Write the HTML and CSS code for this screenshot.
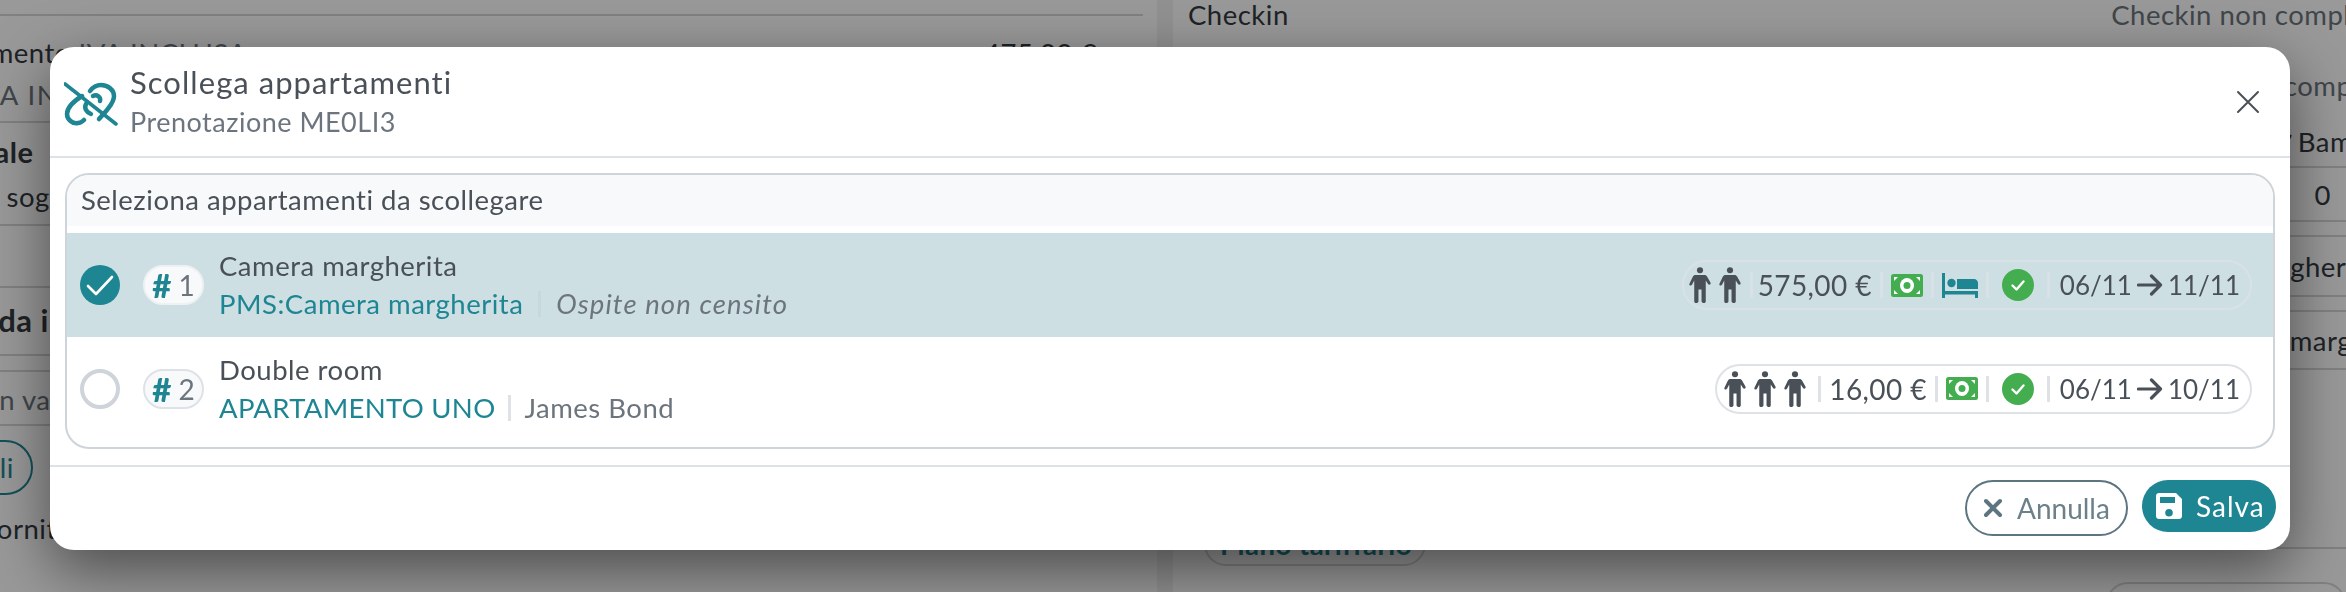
FILE: index.html
```html
<!DOCTYPE html>
<html lang="it">
<head>
  <meta charset="UTF-8">
  <meta name="viewport" content="width=device-width, initial-scale=1.0">
  <title>Scollega appartamenti</title>
  <link rel="stylesheet" href="styles.css">
</head>
<body>
  <svg class="defs" aria-hidden="true">
    <symbol id="person" viewBox="0 0 24 40">
      <circle cx="12" cy="3.6" r="3.4"/>
      <path d="M7 9h10c1.4 0 2.2.6 3 1.800l3.600 6.400c.5 1 .2 1.900-.6 2.300-.8.4-1.600.1-2.100-.7L18.400 15v23c0 1.200-.8 2-2 2s-2.700-.8-2.700-2V25h-3.400v13c0 1.200-1 2-2.700 2-1.200 0-2-.8-2-2V15l-2.500 4.800c-.5.8-1.300 1.100-2.100.7-.8-.4-1.100-1.300-.6-2.300L4 10.800C4.800 9.600 5.600 9 7 9z"/>
    </symbol>
    <symbol id="money" viewBox="0 0 32 23">
      <rect width="32" height="23" rx="2.500" fill="#43ad50"/>
      <ellipse cx="16" cy="11.500" rx="7" ry="7.500" fill="#fff"/>
      <circle cx="16" cy="11.500" r="3.500" fill="#43ad50"/>
      <path d="M3 3h4L3 7zM29 3h-4l4 4zM3 20h4l-4-4zM29 20h-4l4-4z" fill="#fff"/>
    </symbol>
    <symbol id="okay" viewBox="0 0 32 32">
      <circle cx="16" cy="16" r="16" fill="#43ad50"/>
      <path d="M10.500 16.500l4 4 7-8" fill="none" stroke="#fff" stroke-width="2.400" stroke-linecap="round" stroke-linejoin="round"/>
    </symbol>
    <symbol id="arrow" viewBox="0 0 26 22">
      <path d="M1.500 11h22M14.500 2l9 9-9 9" fill="none" stroke="#495057" stroke-width="3.200" stroke-linecap="round" stroke-linejoin="round"/>
    </symbol>
  </svg>

  <div class="page">
    <div class="col col--left">
      <div class="line-row h16"></div>
      <div class="line-row h107 split">
        <div>
          <div class="txt-cut cut-ment">Pagamento <span class="muted">IVA INCLUSA</span></div>
          <div class="txt-cut muted cut-inc">IVA INCLUSA</div>
        </div>
        <div class="price">475,00 € <span class="plus">+</span></div>
      </div>
      <div class="line-row h103">
        <div class="txt-cut bold cut-ale">Totale</div>
        <div class="txt-cut cut-sog">Il soggetto</div>
      </div>
      <div class="line-row h62"></div>
      <div class="line-row h68"><div class="txt-cut bold cut-da">Saldo da incassare</div></div>
      <div class="line-row h16b"></div>
      <div class="line-row h54"><div class="txt-cut muted cut-va">Non valido</div></div>
      <div class="tail">
        <span class="ghost-pill">Dettagli</span>
        <div class="txt-cut cut-ornit">Fornitore</div>
      </div>
    </div>

    <div class="col col--right">
      <div class="rrow r28"><span>Checkin</span><span class="muted over1">Checkin non completato</span></div>
      <div class="rrow r29"></div>
      <div class="rrow r56"><span></span><span class="muted over2">Checkin non completato</span></div>
      <div class="rrow r55 line"><span></span><span class="over3"><svg class="kid" viewBox="0 0 10 18" fill="none" stroke="#343a40" stroke-width="2"><path d="M9 1L1 17"/></svg>Bambini</span></div>
      <div class="rrow r54 line"><span></span><span class="zero">0</span></div>
      <div class="rrow r15 line"></div>
      <div class="rrow r60 line"><span></span><span class="over4">Camera margherita</span></div>
      <div class="rrow r15 line"></div>
      <div class="rrow r58 line"><span></span><span class="over5">Camera margherita</span></div>
      <div class="rrow r179 line"></div>
      <div class="plan-wrap"><span class="plan">Piano tariffario</span><span class="corner"></span></div>
    </div>
  </div>

  <div class="overlay"></div>

  <div class="modal">
    <header class="modal__head">
      <svg class="unlink" viewBox="0 0 54 44" fill="none" stroke="#1e8593" stroke-width="4.500" stroke-linecap="round">
        <path d="M1 2l51 40" stroke-width="3.600"/>
        <path d="M18 14C10 19 3 25 3 32c0 6 6 10 11 9 2 0 4-1 6-3"/>
        <path d="M26 9c3-4 7-6 11-6 7 0 13 5 13 11 0 6-4 10-7 14l-8 9"/>
        <path d="M29 14c4-2 8 1 7 5"/>
        <path d="M22 22c-2 4 0 8 5 10"/>
      </svg>
      <div class="modal__titles">
        <div class="modal__title">Scollega appartamenti</div>
        <div class="modal__sub">Prenotazione ME0LI3</div>
      </div>
      <svg class="close" viewBox="0 0 24 24" fill="none" stroke="#495057" stroke-width="2" stroke-linecap="round"><path d="M2 2l20 20M22 2L2 22"/></svg>
    </header>

    <div class="modal__body">
      <div class="card">
        <div class="card__head">Seleziona appartamenti da scollegare</div>

        <div class="room room--on">
          <span class="tick">
            <svg viewBox="0 0 40 40" fill="none" stroke="#fff" stroke-width="2.600" stroke-linecap="round" stroke-linejoin="round"><path d="M8 21l8 8 16-17"/></svg>
          </span>
          <span class="num"><b>#</b>1</span>
          <div class="room__text">
            <div class="room__name">Camera margherita</div>
            <div class="room__meta"><span class="teal">PMS:Camera margherita</span><i class="bar"></i><em>Ospite non censito</em></div>
          </div>
          <div class="chip">
            <svg class="person"><use href="#person"/></svg><svg class="person"><use href="#person"/></svg>
            <i class="bar bar--tight"></i><span>575,00 €</span>
            <i class="bar"></i><svg class="money"><use href="#money"/></svg>
            <i class="bar"></i>
            <svg class="bed" viewBox="0 0 36 25" fill="#1e8593"><path d="M0 0h3v18h33v7h-3v-3.500H3V25H0z"/><circle cx="9.500" cy="10" r="4.200"/><path d="M15 6h17c2.200 0 4 1.800 4 4v6H15z"/></svg>
            <i class="bar"></i><svg class="okay"><use href="#okay"/></svg>
            <i class="bar"></i><span class="dates">06/11<svg class="arrow"><use href="#arrow"/></svg>11/11</span>
          </div>
        </div>

        <div class="room room--last">
          <span class="tick tick--off"></span>
          <span class="num num--off"><b>#</b>2</span>
          <div class="room__text">
            <div class="room__name">Double room</div>
            <div class="room__meta"><span class="teal">APARTAMENTO UNO</span><i class="bar"></i><span class="muted">James Bond</span></div>
          </div>
          <div class="chip chip--plain">
            <svg class="person"><use href="#person"/></svg><svg class="person"><use href="#person"/></svg><svg class="person"><use href="#person"/></svg>
            <i class="bar"></i><span>16,00 €</span>
            <i class="bar"></i><svg class="money"><use href="#money"/></svg>
            <i class="bar"></i><svg class="okay"><use href="#okay"/></svg>
            <i class="bar"></i><span class="dates">06/11<svg class="arrow"><use href="#arrow"/></svg>10/11</span>
          </div>
        </div>
      </div>
    </div>

    <footer class="modal__foot">
      <button class="btn btn--line" type="button">
        <svg viewBox="0 0 20 20" fill="none" stroke="#5c7580" stroke-width="4" stroke-linecap="round"><path d="M3 3l14 14M17 3L3 17"/></svg>
        Annulla
      </button>
      <button class="btn btn--fill" type="button">
        <svg viewBox="0 0 26 26" fill="#fff"><path fill-rule="evenodd" d="M3 0h17l6 6v17c0 1.700-1.300 3-3 3H3c-1.700 0-3-1.300-3-3V3c0-1.700 1.300-3 3-3zm1 4v6h15V4zm9 12a3.800 3.800 0 1 0 0 7.600 3.800 3.800 0 0 0 0-7.600z"/></svg>
        Salva
      </button>
    </footer>
  </div>
</body>
</html>
```
FILE: styles.css
```css
* { box-sizing: border-box; }
html, body { margin: 0; height: 592px; overflow: hidden; }
body {
  font-family: "Lato", "Open Sans", sans-serif;
  font-size: 27.5px;
  letter-spacing: .5px;
  color: #343a40;
  background: #fff;
}
.defs { width: 0; height: 0; display: block; }
.muted { color: #6c757d; }
.bold { font-weight: 700; }

/* page behind the dialog */
.page {
  display: grid;
  grid-template-columns: 1173px 1fr;
  height: 592px;
  overflow: hidden;
}
.col--left { border-right: 16px solid #f2f2f2; padding-right: 14px; }
.col--right { padding-left: 15px; overflow: hidden; }
.line-row { display: flow-root; border-bottom: 2px solid #d8d8d8; }
.h16 { height: 16px; }
.h107 { height: 107px; }
.h103 { height: 103px; }
.h62 { height: 62px; }
.h68 { height: 68px; }
.h16b { height: 16px; }
.h54 { height: 54px; }
.split { display: flex; justify-content: space-between; padding-top: 20px; }
.txt-cut { white-space: nowrap; }
.cut-ment { margin-left: -69px; }
.cut-inc { margin: 9px 0 0 -28px; letter-spacing: 1.5px; }
.cut-ale { margin: 11px 0 0 -48px; font-size: 29px; }
.cut-sog { margin: 11px 0 0 -16px; }
.cut-da { margin: 13px 0 0 -88px; font-size: 31px; }
.cut-va { margin: 11px 0 0 -38px; }
.cut-ornit { margin: 17px 0 0 -18px; }
.price { margin-right: 22px; }
.plus { color: #43ad50; }
.tail { padding-top: 14px; }
.ghost-pill {
  display: inline-block;
  margin-left: -105px;
  padding: 9px 17px;
  border: 2px solid #1e8593;
  border-radius: 28px;
  color: #1e8593;
}
.rrow {
  display: flex;
  justify-content: space-between;
  align-items: center;
  white-space: nowrap;
}
.rrow.line { border-bottom: 2px solid #d8d8d8; }
.r28 { height: 28px; }
.r29 { height: 29px; }
.r56 { height: 56px; }
.r55 { height: 55px; padding-top: 4px; }
.r54 { height: 54px; }
.r15 { height: 15px; }
.r60 { height: 60px; }
.r58 { height: 58px; }
.r179 { height: 179px; }
.over1 { margin-right: -70px; }
.over2 { margin-right: -79px; }
.over3 { margin-right: -53px; }
.over4 { margin-right: -32px; }
.over5 { margin-right: -79px; }
.kid { width: 10px; height: 18px; margin-right: 6px; }
.zero { margin-right: 15px; }
.plan-wrap { display: flex; justify-content: space-between; align-items: flex-start; margin-left: 16px; }
.plan {
  margin-top: -29px;
  padding: 6px 0 0 14px;
  width: 222px;
  height: 46px;
  border: 2px solid #d8d8d8;
  border-radius: 22px;
  color: #1e8593;
  font-weight: 700;
  white-space: nowrap;
}
.corner {
  width: 240px;
  height: 60px;
  margin-top: 33px;
  border: 2px solid #d8d8d8;
  border-radius: 22px;
}

.overlay {
  position: fixed;
  inset: 0;
  background: rgba(0, 0, 0, .4);
}

/* dialog */
.modal {
  position: absolute;
  left: 50px;
  top: 47px;
  width: 2240px;
  height: 503px;
  display: flex;
  flex-direction: column;
  background: #fff;
  border-radius: 24px;
  box-shadow: 0 20px 60px rgba(0, 0, 0, .5);
  color: #495057;
}
.modal__head {
  height: 111px;
  flex: none;
  display: flex;
  align-items: center;
  padding: 0 30px 0 14px;
  border-bottom: 2px solid #dee2e6;
}
.unlink { width: 54px; height: 44px; flex: none; margin-top: 4px; }
.modal__titles { flex: 1; margin-left: 12px; }
.modal__title { font-size: 31px; letter-spacing: 1.05px; line-height: 40px; }
.modal__sub { font-size: 27px; line-height: 40px; color: #6c757d; }
.close { width: 24px; height: 24px; }

.modal__body { flex: 1; padding: 15px; }
.card {
  height: 276px;
  border: 2px solid #ced4da;
  border-radius: 24px;
  overflow: hidden;
}
.card__head {
  height: 51px;
  padding: 6px 14px 0;
  margin-bottom: 7px;
  background: #f8f9fa;
  line-height: 38px;
}
.room {
  display: flex;
  align-items: center;
  padding: 0 21px 0 13px;
  height: 104px;
}
.room--on { background: #cddfe3; }
.room--last { height: 112px; padding-bottom: 9px; }
.room--last .teal { letter-spacing: .3px; }

.tick {
  flex: none;
  width: 40px;
  height: 40px;
  border-radius: 50%;
  background: #1e8593;
}
.tick svg { display: block; }
.tick--off { background: #fff; border: 4px solid #ced4da; }
.num {
  flex: none;
  display: flex;
  align-items: center;
  justify-content: center;
  gap: 7px;
  width: 61px;
  height: 40px;
  margin-left: 23px;
  border-radius: 20px;
  background: #f8f9fa;
  border: 2px solid #eef1f3;
  color: #6c757d;
  font-size: 28px;
  letter-spacing: 0;
}
.num b { color: #1e8593; font-weight: 900; font-size: 33px; }
.num--off { border-color: #dee2e6; }
.room__text { flex: 1; margin-left: 15px; }
.room__name { line-height: 38px; }
.room__meta { display: flex; align-items: center; line-height: 38px; }
.room__meta em { color: #6c757d; letter-spacing: 1.1px; }
.teal { color: #1e8593; }
.bar { flex: none; display: block; width: 3px; height: 26px; background: #dee2e6; }
.room__meta .bar { margin: 0 15px; }
.room--last .room__meta .bar { margin: 0 13px; }
.room--on .room__meta .bar { background: #c5d8dc; }

.chip {
  flex: none;
  display: flex;
  align-items: center;
  height: 50px;
  padding: 0 10px 0 1px;
  border: 2px solid #d8e2e6;
  border-radius: 25px;
  font-size: 28px;
  letter-spacing: .4px;
  color: #495057;
}
.chip--plain { border-color: #dee2e6; background: #fff; padding-left: 3px; }
.chip .bar { margin: 0 8px; }
.chip .bar--tight { margin: 0 5px; }
.room--on .chip .bar { background: #d8e2e6; }
.person { width: 22px; height: 36px; fill: #495057; margin: 0 4px; }
.money { width: 32px; height: 23px; }
.bed { width: 36px; height: 25px; }
.okay { width: 32px; height: 32px; margin: 0 5px; }
.dates { display: flex; align-items: center; margin-left: 2px; font-size: 26px; letter-spacing: 0; }
.arrow { width: 26px; height: 22px; margin: 0 5px; }

.modal__foot {
  flex: none;
  height: 85px;
  display: flex;
  align-items: flex-start;
  justify-content: flex-end;
  gap: 14px;
  padding: 13px 14px 0 0;
  border-top: 2px solid #dee2e6;
}
.btn {
  display: flex;
  align-items: center;
  gap: 14px;
  border-radius: 28px;
  font: inherit;
  font-size: 28px;
}
.btn--line {
  width: 163px;
  height: 56px;
  padding: 0 0 0 16px;
  background: #fff;
  border: 2px solid #5c7580;
  color: #6c8089;
}
.btn--line svg { width: 20px; height: 20px; }
.btn--fill {
  width: 134px;
  height: 52px;
  padding: 0 0 0 14px;
  background: #1e8593;
  border: 0;
  color: #fff;
  letter-spacing: 1px;
}
.btn--fill svg { width: 26px; height: 26px; }
```
